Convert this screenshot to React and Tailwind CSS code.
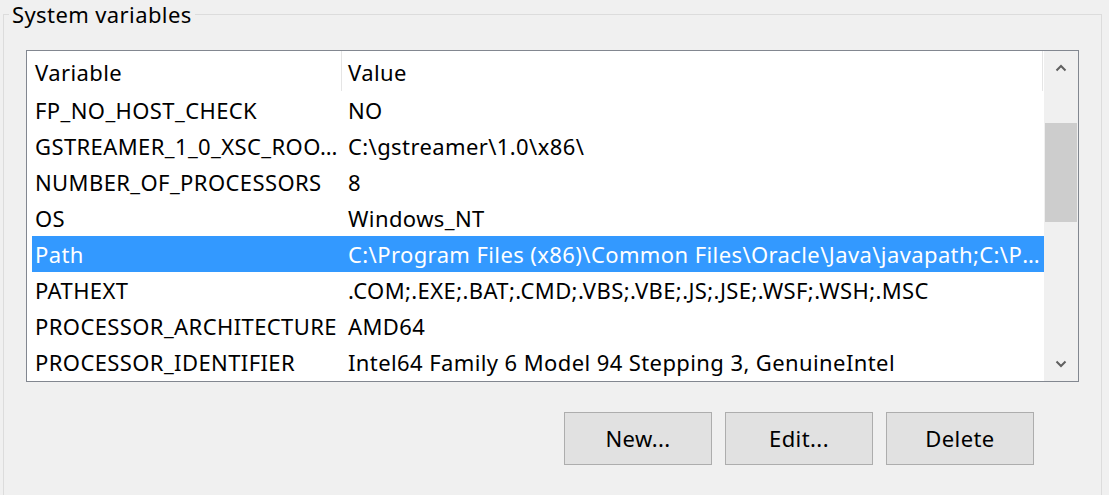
import React from 'react';

const rows = [
    { name: 'FP_NO_HOST_CHECK', value: 'NO' },
    { name: 'GSTREAMER_1_0_XSC_ROOT_X86', value: 'C:\\gstreamer\\1.0\\x86\\' },
    { name: 'NUMBER_OF_PROCESSORS', value: '8' },
    { name: 'OS', value: 'Windows_NT' },
    { name: 'Path', value: 'C:\\Program Files (x86)\\Common Files\\Oracle\\Java\\javapath;C:\\Program Files\\Git\\cmd', selected: true },
    { name: 'PATHEXT', value: '.COM;.EXE;.BAT;.CMD;.VBS;.VBE;.JS;.JSE;.WSF;.WSH;.MSC' },
    { name: 'PROCESSOR_ARCHITECTURE', value: 'AMD64' },
    { name: 'PROCESSOR_IDENTIFIER', value: 'Intel64 Family 6 Model 94 Stepping 3, GenuineIntel' },
];

const Chevron = ({ up }) => (
    <svg width="12" height="8" viewBox="0 0 12 8" className="text-[#606060]">
        <polyline
            points={up ? '1.5,6.5 6,2 10.5,6.5' : '1.5,1.5 6,6 10.5,1.5'}
            fill="none"
            stroke="currentColor"
            strokeWidth="2"
        />
    </svg>
);

const App = () => {
    return (
        <div className="w-[1109px] h-[495px] bg-[#f0f0f0] overflow-hidden text-black font-['Noto_Sans',sans-serif] text-[22px] tracking-[0.4px]">
            {/* System variables group */}
            <div className="relative ml-[3px] mt-[14px] w-[1099px] h-[500px] border border-[#dcdcdc]">
                <span className="absolute left-[5px] top-[-15px] px-[3px] bg-[#f0f0f0] leading-[28px]">
                    System variables
                </span>

                <div className="pt-[35px] pl-[22px]">
                    {/* List view */}
                    <div className="flex w-[1053px] h-[332px] border border-[#828790] bg-white">
                        <div className="w-[1017px] overflow-hidden">
                            <div className="flex h-[41px] items-center ml-[5px]">
                                <div className="w-[309px] pl-[3px] pt-[1px]">Variable</div>
                                <div className="w-px h-[40px] self-start bg-[#e5e5e5]" />
                                <div className="flex-1 pl-[6px] pt-[1px]">Value</div>
                                <div className="w-px h-[40px] self-start bg-[#e5e5e5] mr-[1px]" />
                            </div>
                            {rows.map((row) => (
                                <div
                                    key={row.name}
                                    className={`flex h-[36px] items-center ml-[5px] ${row.selected ? 'bg-[#3399ff] text-white' : ''}`}
                                >
                                    <div className="w-[309px] pl-[3px] truncate">{row.name}</div>
                                    <div className="flex-1 min-w-0 pl-[7px] pr-[2px] truncate">{row.value}</div>
                                </div>
                            ))}
                        </div>

                        {/* Scrollbar */}
                        <div className="w-[34px] bg-[#f0f0f0] flex flex-col">
                            <div className="h-[34px] flex items-center justify-center">
                                <Chevron up />
                            </div>
                            <div className="flex-1">
                                <div className="mt-[38px] mx-[1px] h-[99px] bg-[#cdcdcd]" />
                            </div>
                            <div className="h-[34px] flex items-center justify-center">
                                <Chevron />
                            </div>
                        </div>
                    </div>

                    {/* Buttons */}
                    <div className="flex gap-[13px] mt-[30px] ml-[538px]">
                        {['New...', 'Edit...', 'Delete'].map((label) => (
                            <button
                                key={label}
                                className="w-[148px] h-[53px] border border-[#adadad] bg-[#e1e1e1]"
                            >
                                {label}
                            </button>
                        ))}
                    </div>
                </div>
            </div>
        </div>
    );
};

export default App;
